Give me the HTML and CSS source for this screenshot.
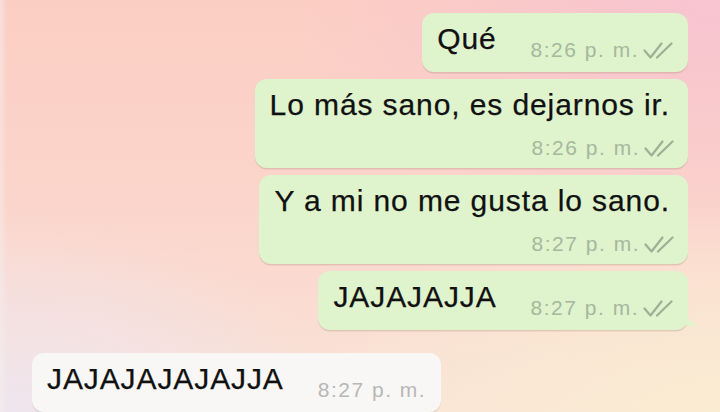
FILE: index.html
```html
<!DOCTYPE html>
<html lang="es">
<head>
<meta charset="utf-8">
<title>Chat</title>
<link rel="stylesheet" href="styles.css">
</head>
<body>
<main class="chat">
  <div class="bubble out single">
    <span class="text">Qué</span>
    <span class="meta"><span class="time">8:26 p. m.</span><svg class="ticks" viewBox="0 0 30 17" width="30" height="17"><path d="M1.5 8.5 L7.5 15.5 L18.5 1.5 M14 15.5 L28.5 1.5"/></svg></span>
  </div>
  <div class="bubble out multi">
    <span class="text">Lo más sano, es dejarnos ir.</span>
    <span class="meta"><span class="time">8:26 p. m.</span><svg class="ticks" viewBox="0 0 30 17" width="30" height="17"><path d="M1.5 8.5 L7.5 15.5 L18.5 1.5 M14 15.5 L28.5 1.5"/></svg></span>
  </div>
  <div class="bubble out multi">
    <span class="text">Y a mi no me gusta lo sano.</span>
    <span class="meta"><span class="time">8:27 p. m.</span><svg class="ticks" viewBox="0 0 30 17" width="30" height="17"><path d="M1.5 8.5 L7.5 15.5 L18.5 1.5 M14 15.5 L28.5 1.5"/></svg></span>
  </div>
  <div class="bubble out single tail">
    <span class="text">JAJAJAJJA</span>
    <span class="meta"><span class="time">8:27 p. m.</span><svg class="ticks" viewBox="0 0 30 17" width="30" height="17"><path d="M1.5 8.5 L7.5 15.5 L18.5 1.5 M14 15.5 L28.5 1.5"/></svg></span>
    <svg class="tail-shape" viewBox="0 0 14 16" width="14" height="16"><path d="M0 0 C1 8 4 12 13 14 C8 15.5 3 15.5 0 14 Z"/></svg>
  </div>
  <div class="bubble in single">
    <span class="text">JAJAJAJAJAJJA</span>
    <span class="meta"><span class="time">8:27 p. m.</span></span>
  </div>
</main>
</body>
</html>
```

FILE: styles.css
```css
html, body {
  margin: 0;
  padding: 0;
}

body {
  width: 720px;
  height: 412px;
  overflow: hidden;
  font-family: "Liberation Sans", Arial, sans-serif;
  background:
    linear-gradient(90deg, rgba(245, 238, 236, 0.55) 0px, rgba(245, 238, 236, 0) 7px),
    radial-gradient(ellipse 420px 260px at 100% 0%, #f7c4d0 0%, rgba(247, 196, 208, 0) 100%),
    radial-gradient(ellipse 340px 200px at 0% 100%, #efe5ee 0%, rgba(239, 229, 238, 0) 100%),
    radial-gradient(ellipse 460px 220px at 100% 100%, #faecd2 0%, rgba(250, 236, 210, 0) 100%),
    linear-gradient(180deg, #fbcec3 0%, #fbd5cb 50%, #f9e3d8 100%);
}

.chat {
  display: flex;
  flex-direction: column;
  align-items: flex-end;
  padding: 13px 32px 0 32px;
  gap: 7px;
}

.bubble {
  position: relative;
  box-sizing: border-box;
  border-radius: 12px;
  padding: 9px 15px 10px 15px;
  color: #111;
  box-shadow: 0 1.5px 0.5px rgba(160, 130, 110, 0.28);
}

.bubble.out {
  background: #dff3cd;
}

.bubble.in {
  align-self: flex-start;
  margin-top: 16px;
  background: #f8f7f5;
  box-shadow: 0 1.5px 0.5px rgba(150, 140, 130, 0.22);
}

.text {
  font-size: 30px;
  line-height: 34px;
  letter-spacing: 0.9px;
  white-space: nowrap;
  -webkit-text-stroke: 0.25px #111;
}

.single {
  display: flex;
  align-items: flex-start;
  gap: 34px;
}

.single .meta {
  margin-top: 16px;
}

.multi {
  display: flex;
  flex-direction: column;
  padding-right: 18px;
  padding-bottom: 8px;
}

.multi .meta {
  align-self: flex-end;
  margin-top: 14px;
  margin-right: -4px;
}

.meta {
  display: flex;
  align-items: flex-end;
  gap: 4px;
  height: 24px;
}

.time {
  font-size: 21px;
  line-height: 24px;
  letter-spacing: 1.5px;
  color: #a6b89d;
  white-space: nowrap;
}

.in .time {
  color: #b7b7b7;
}

.ticks {
  display: block;
  margin-bottom: 3px;
  fill: none;
  stroke: #9db095;
  stroke-width: 2.2;
  stroke-linecap: round;
  stroke-linejoin: round;
}

.tail-shape {
  position: absolute;
  right: -12px;
  bottom: 3px;
  fill: #dff3cd;
}
```
